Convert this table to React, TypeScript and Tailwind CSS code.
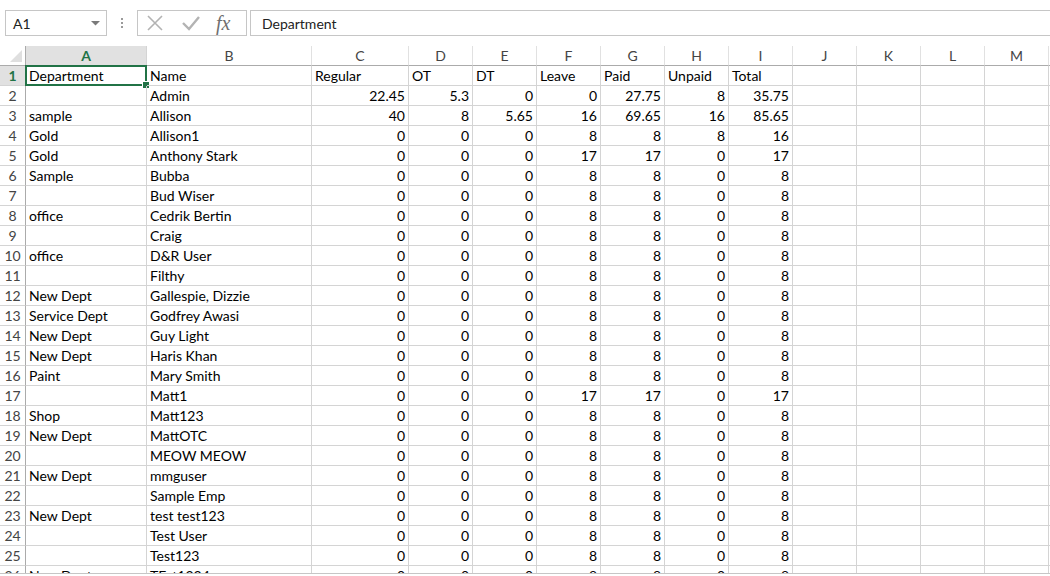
import React from "react";

const FONT = { fontFamily: "Lato, 'Open Sans', sans-serif" };

type Row = [string, string, ...(string | number)[]];

const def = (d: string, n: string): Row => [d, n, 0, 0, 0, 8, 8, 0, 8];

const rows: Row[] = [
  ["Department", "Name", "Regular", "OT", "DT", "Leave", "Paid", "Unpaid", "Total"],
  ["", "Admin", 22.45, 5.3, 0, 0, 27.75, 8, 35.75],
  ["sample", "Allison", 40, 8, 5.65, 16, 69.65, 16, 85.65],
  ["Gold", "Allison1", 0, 0, 0, 8, 8, 8, 16],
  ["Gold", "Anthony Stark", 0, 0, 0, 17, 17, 0, 17],
  def("Sample", "Bubba"),
  def("", "Bud Wiser"),
  def("office", "Cedrik Bertin"),
  def("", "Craig"),
  def("office", "D&R User"),
  def("", "Filthy"),
  def("New Dept", "Gallespie, Dizzie"),
  def("Service Dept", "Godfrey Awasi"),
  def("New Dept", "Guy Light"),
  def("New Dept", "Haris Khan"),
  def("Paint", "Mary Smith"),
  ["", "Matt1", 0, 0, 0, 17, 17, 0, 17],
  def("Shop", "Matt123"),
  def("New Dept", "MattOTC"),
  def("", "MEOW MEOW"),
  def("New Dept", "mmguser"),
  def("", "Sample Emp"),
  def("New Dept", "test test123"),
  def("", "Test User"),
  def("", "Test123"),
  def("New Dept", "TEst1234"),
];

const letters = ["A", "B", "C", "D", "E", "F", "G", "H", "I", "J", "K", "L", "M"];

function Toolbar() {
  return (
    <div className="h-[46px] shrink-0 flex items-start pt-[10px] pl-[5px] bg-white">
      <div className="w-[102px] h-[26px] border border-[#c6c6c6] flex items-center justify-between pl-[7px] pr-[6px] text-[14px] text-[#222]">
        <span>A1</span>
        <svg width="9" height="5" viewBox="0 0 9 5">
          <polygon points="0,0 9,0 4.5,4.5" fill="#7a7a7a" />
        </svg>
      </div>
      <div className="w-[30px] h-[26px] flex flex-col items-center justify-center gap-[2px]">
        <div className="w-[2px] h-[2px] bg-[#9a9a9a]" />
        <div className="w-[2px] h-[2px] bg-[#9a9a9a]" />
        <div className="w-[2px] h-[2px] bg-[#9a9a9a]" />
      </div>
      <div className="w-[110px] h-[26px] border border-[#c6c6c6] flex items-center">
        <svg width="20" height="20" viewBox="0 0 20 20" className="ml-[7px]">
          <path d="M3 3 L17 17 M17 3 L3 17" stroke="#b3b3b3" strokeWidth="1.6" fill="none" />
        </svg>
        <svg width="20" height="20" viewBox="0 0 20 20" className="ml-[16px]">
          <path d="M2 10 L8 16 L18 4" stroke="#b3b3b3" strokeWidth="2.4" fill="none" />
        </svg>
        <span
          className="ml-[15px] text-[20px] italic text-[#6f6f6f] leading-none"
          style={{ fontFamily: "'Liberation Serif', serif" }}
        >
          fx
        </span>
      </div>
      <div className="ml-[3px] flex-1 h-[26px] border border-r-0 border-[#c6c6c6] flex items-center pl-[11px] text-[14px] text-[#222]">
        Department
      </div>
    </div>
  );
}

function Grid() {
  return (
    <div className="flex-1 overflow-hidden">
      <div className="grid grid-cols-[26px_121px_165px_97px_repeat(10,64px)_1fr] auto-rows-[20px]">
        {/* header row */}
        <div className="relative border-r border-b border-[#ababab] bg-white">
          <svg width="12" height="12" viewBox="0 0 12 12" className="absolute right-[3px] bottom-[3px]">
            <polygon points="12,0 12,12 0,12" fill="#dfdfdf" />
          </svg>
        </div>
        {letters.map((l, i) => (
          <div
            key={l}
            className={
              i === 0
                ? "flex items-center justify-center border-r border-b border-r-[#d4d4d4] border-b-[#ababab] bg-[#e1e1e1] text-[#217346] font-bold text-[14px]"
                : "flex items-center justify-center border-r border-b border-r-[#e1e1e1] border-b-[#ababab] bg-white text-[#444] text-[14px]"
            }
          >
            {l}
          </div>
        ))}
        <div className="border-b border-[#ababab] bg-white" />
        {rows.map((r, ri) => (
          <React.Fragment key={ri}>
            <div
              className={
                ri === 0
                  ? "flex items-center justify-center border-r border-b border-r-[#ababab] border-b-[#d4d4d4] bg-[#e1e1e1] text-[#217346] font-bold text-[14px]"
                  : "flex items-center justify-center border-r border-b border-r-[#ababab] border-b-[#d4d4d4] bg-white text-[#444] text-[14px]"
              }
            >
              {ri + 1}
            </div>
            {letters.map((l, ci) => {
              const v = r[ci];
              const isNum = typeof v === "number";
              return (
                <div
                  key={l}
                  className={
                    "relative flex items-end pb-[0px] leading-[18px] border-r border-b border-[#d4d4d4] text-[14px] text-black whitespace-nowrap " +
                    (isNum ? "justify-end pr-[3px]" : "pl-[3px]")
                  }
                >
                  {v === undefined ? "" : String(v)}
                  {ri === 0 && ci === 0 && (
                    <div className="absolute -left-px -top-px w-[122px] h-[21px] border-2 border-[#217346] pointer-events-none">
                      <div className="absolute -right-[4px] -bottom-[4px] w-[6px] h-[6px] bg-[#217346] outline outline-1 outline-white" />
                    </div>
                  )}
                </div>
              );
            })}
            <div className="border-b border-[#d4d4d4]" />
          </React.Fragment>
        ))}
      </div>
    </div>
  );
}

export default function App() {
  return (
    <div className="w-[1050px] h-[576px] overflow-hidden flex flex-col bg-white" style={FONT}>
      <Toolbar />
      <Grid />
      <div className="h-[3px] shrink-0 border-t border-[#c6c6c6] bg-white" />
    </div>
  );
}
